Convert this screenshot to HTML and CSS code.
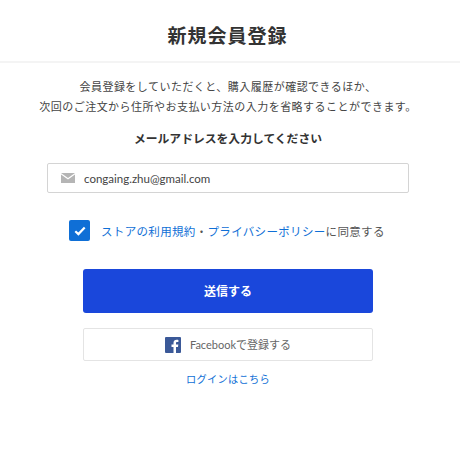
FILE: index.html
```html
<!DOCTYPE html>
<html lang="ja">
<head>
    <meta charset="UTF-8">
    <meta name="viewport" content="width=device-width, initial-scale=1.0">
    <title>新規会員登録</title>
    <link rel="stylesheet" href="styles.css">
</head>
<body>
    <header class="header">
        <h1>新規会員登録</h1>
    </header>
    <main class="content">
        <p class="lead">会員登録をしていただくと、購入履歴が確認できるほか、<br>次回のご注文から住所やお支払い方法の入力を省略することができます。</p>
        <h2 class="label">メールアドレスを入力してください</h2>
        <div class="field">
            <svg class="mail-icon" width="14" height="10" viewBox="0 0 14 10">
                <path d="M0 0H14L7 5Z" fill="#b5b5b5"/>
                <path d="M0 1.6L7 6.6L14 1.6V10H0Z" fill="#b5b5b5"/>
            </svg>
            <span>congaing.zhu@gmail.com</span>
        </div>
        <div class="agree">
            <span class="checkbox">
                <svg width="12" height="10" viewBox="0 0 12 10">
                    <path d="M1.3 5.2L4.4 8.1L10.7 1.6" fill="none" stroke="#fff" stroke-width="2.2"/>
                </svg>
            </span>
            <span class="agree-text"><a href="#">ストアの利用規約</a>・<a href="#">プライバシーポリシー</a>に同意する</span>
        </div>
        <button class="submit">送信する</button>
        <button class="facebook">
            <svg width="16" height="16" viewBox="0 0 16 16">
                <rect width="16" height="16" rx="1" fill="#3b5998"/>
                <path d="M11 16V10H13L13.3 7.6H11V6.2C11 5.5 11.2 5 12.2 5H13.4V2.9C13.2 2.9 12.5 2.8 11.6 2.8C9.8 2.8 8.5 3.9 8.5 6V7.6H6.5V10H8.5V16Z" fill="#fff"/>
            </svg>
            <span class="facebook-text">Facebookで登録する</span>
        </button>
        <a class="login" href="#">ログインはこちら</a>
    </main>
</body>
</html>
```

FILE: styles.css
```css
body {
    margin: 0;
    background-color: #fff;
    color: #333;
    font-family: 'Lato', 'Noto Sans CJK JP', sans-serif;
}

a {
    color: #0f6fd6;
    text-decoration: none;
}

.header {
    height: 61px;
    padding-right: 5px;
    display: flex;
    justify-content: center;
    align-items: center;
    border-bottom: 2px solid #f4f4f4;
}

.header h1 {
    margin: 10px 0 0;
    font-size: 19px;
    letter-spacing: 1px;
    line-height: 28px;
    color: #333;
}

.content {
    padding-right: 4px;
    display: flex;
    flex-direction: column;
    align-items: center;
}

.lead {
    margin: 14px 0 0;
    font-size: 11px;
    line-height: 20px;
    letter-spacing: 0.47px;
    text-align: center;
    color: #444;
}

.label {
    margin: 12px 0 0;
    font-size: 11.8px;
    line-height: 20px;
    color: #333;
}

.field {
    box-sizing: border-box;
    width: 362px;
    height: 30px;
    margin-top: 14px;
    padding-left: 13px;
    display: flex;
    align-items: center;
    gap: 9px;
    border: 1px solid #d4d4d4;
    border-radius: 2px;
    font-size: 11.5px;
    color: #444;
}

.agree {
    width: 318px;
    margin-top: 27px;
    display: flex;
    align-items: center;
    gap: 11px;
    font-size: 11.5px;
    letter-spacing: 0.33px;
    white-space: nowrap;
    color: #555;
}

.checkbox {
    width: 21px;
    height: 21px;
    border-radius: 2px;
    background-color: #0f6fd6;
    display: flex;
    justify-content: center;
    align-items: center;
}

.submit {
    width: 290px;
    height: 44px;
    margin-top: 28px;
    padding: 0 0 2px;
    border: none;
    border-radius: 3px;
    background-color: #1a47db;
    color: #fff;
    font-family: inherit;
    font-size: 12px;
    font-weight: 700;
}

.facebook {
    width: 290px;
    height: 33px;
    margin-top: 15px;
    display: flex;
    justify-content: center;
    align-items: center;
    gap: 9px;
    background-color: #fff;
    border: 1px solid #e4e4e4;
    border-radius: 2px;
    color: #666;
    font-family: inherit;
    font-size: 11px;
}

.facebook-text {
    margin-bottom: 2px;
}

.login {
    margin-top: 10px;
    font-size: 10.2px;
    line-height: 16px;
    letter-spacing: 0.3px;
}
```
